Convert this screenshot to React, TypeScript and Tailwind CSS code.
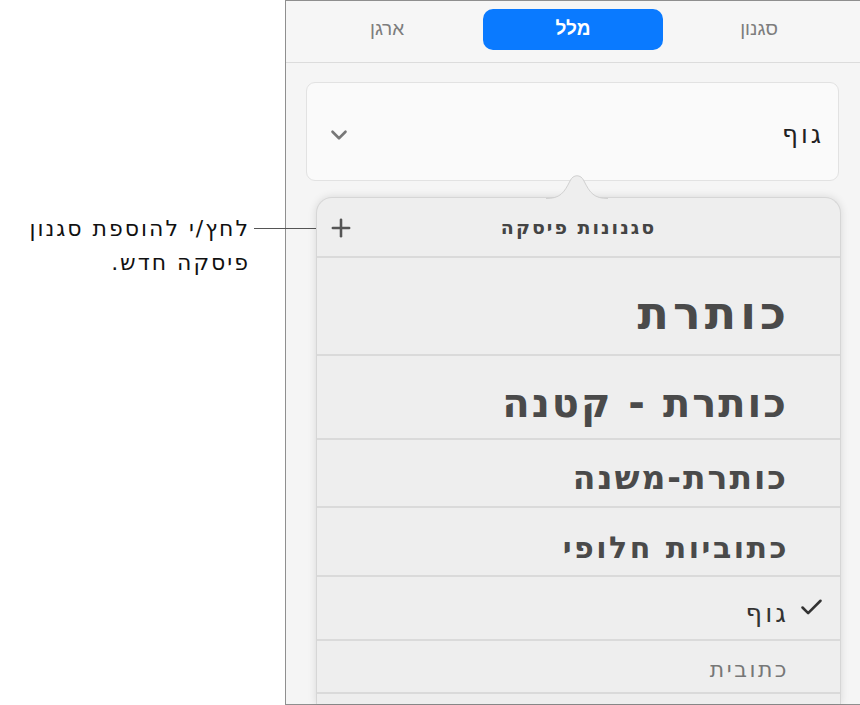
import { Check, ChevronDown, Plus } from "lucide-react";

const styles = [
  { name: "כותרת", cls: "h-[98px] pt-[14px] text-[46px] tracking-[4px] font-bold text-[#4a4a4a]", nudge: "-mr-[4px]" },
  { name: "כותרת - קטנה", cls: "h-[84px] pt-[12px] text-[40px] tracking-[2px] font-bold text-[#4a4a4a]", nudge: "-mr-[2px]" },
  { name: "כותרת-משנה", cls: "h-[68px] pt-[10px] text-[33px] tracking-[2px] font-bold text-[#4a4a4a]", nudge: "-mr-[2px]" },
  { name: "כתוביות חלופי", cls: "h-[69px] pt-[12px] text-[30px] tracking-[2.5px] font-bold text-[#4a4a4a]", nudge: "-mr-[3px]" },
  { name: "גוף", cls: "h-[64px] pt-[10px] text-[26px] tracking-[3px] text-[#333]", nudge: "-mr-[3px]", checked: true },
  { name: "כתובית", cls: "h-[53px] pt-[6px] text-[22px] tracking-[2.5px] text-[#777]", nudge: "-mr-[3px]" },
  { name: "", cls: "h-[40px]", nudge: "" },
];

const App = () => {
  return (
    <div
      className="relative flex h-[705px] w-[860px] overflow-hidden bg-white"
      style={{ fontFamily: '"DejaVu Sans", "Liberation Sans", sans-serif' }}
    >
      {/* callout */}
      <div className="w-[285px] shrink-0 pt-[212px] pr-[35px]" dir="rtl">
        <p className="text-right text-[22px] leading-[34px] tracking-[2px] text-[#111]">
          לחץ/י להוספת סגנון
          <br />
          פיסקה חדש.
        </p>
      </div>
      <div className="absolute left-[254px] top-[228px] h-px w-[72px] bg-[#555]" />

      {/* inspector panel */}
      <div className="flex flex-1 flex-col border-l border-t border-b border-[#8f8f8f] bg-[#f5f5f5]" dir="rtl">
        <div
          className="grid h-[62px] shrink-0 grid-cols-3 border-b border-[#dcdcdc] bg-[#f6f6f6] px-2 pt-[8px]"
          style={{ fontFamily: '"Liberation Sans", Arial, sans-serif' }}
        >
          <div className="flex h-[41px] items-center justify-center text-[19px] text-[#7d7d7d]">סגנון</div>
          <div className="mx-[3px] flex h-[41px] items-center justify-center rounded-[10px] bg-[#0a7aff] text-[19px] font-bold text-white">
            מלל
          </div>
          <div className="flex h-[41px] items-center justify-center text-[19px] text-[#7d7d7d]">ארגן</div>
        </div>

        <div className="mr-[21px] ml-[20px] mt-[19px] flex h-[99px] shrink-0 items-center justify-between rounded-[9px] border border-[#e2e2e2] bg-[#fafafa] pt-[6px] pr-[14px] pl-[22px]">
          <span className="text-[25px] tracking-[3px] text-[#222]">גוף</span>
          <ChevronDown className="-ml-[3px] h-[26px] w-[26px] text-[#777]" strokeWidth={2.4} />
        </div>

        {/* popover */}
        <div className="relative mr-[19px] ml-[30px] mt-[16px] min-h-0 flex-1 rounded-t-[16px] border border-b-0 border-[#d6d6d6] bg-[#eeeeee] shadow-[0_0_8px_rgba(0,0,0,0.12)]">
          <svg
            className="absolute -top-[27px] left-[229px]"
            width="62"
            height="28"
            viewBox="0 0 62 28"
          >
            <path
              d="M0 27.5 C14 27.5 18 22 24 10 C27 3 35 3 38 10 C44 22 48 27.5 62 27.5"
              fill="#eeeeee"
              stroke="#d0d0d0"
              strokeWidth="1"
            />
          </svg>
          <div className="overflow-hidden rounded-t-[16px]">
            <div className="relative flex h-[60px] items-center justify-center border-b-2 border-[#dadada]">
              <span className="text-[19px] tracking-[2px] font-bold text-[#444]">סגנונות פיסקה</span>
              <Plus className="absolute left-[10px] top-[16px] h-[28px] w-[28px] text-[#555]" strokeWidth={2.2} />
            </div>
            {styles.map((s, i) => (
              <div
                key={i}
                className={`relative flex items-center border-b-2 border-[#dadada] pr-[54px] ${s.cls}`}
              >
                {s.checked && (
                  <Check className="absolute right-[15px] -mt-[12px] h-[27px] w-[27px] text-[#333]" strokeWidth={2.3} />
                )}
                <span className={s.nudge}>{s.name}</span>
              </div>
            ))}
          </div>
        </div>
      </div>
    </div>
  );
};

export default App;
